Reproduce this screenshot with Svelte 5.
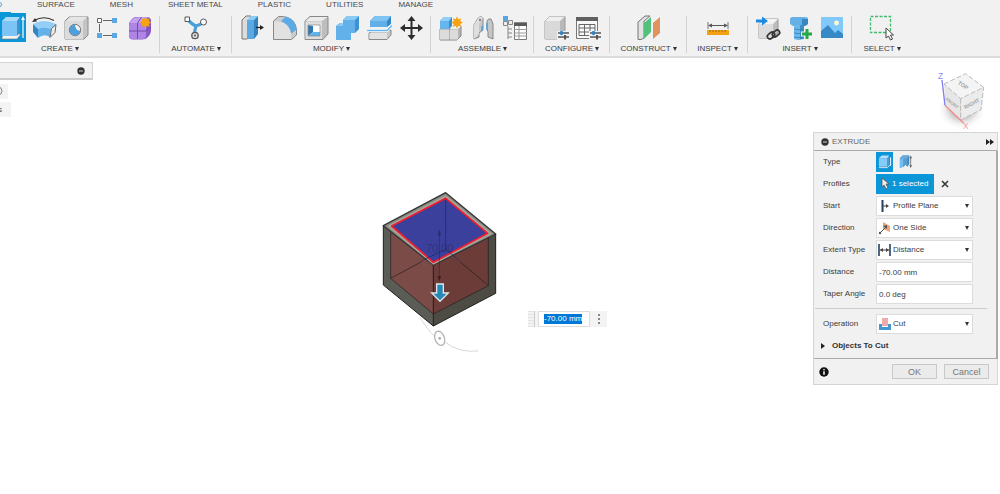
<script>
  import { onMount } from 'svelte';

  const tabs = ['SOLID', 'SURFACE', 'MESH', 'SHEET METAL', 'PLASTIC', 'UTILITIES', 'MANAGE'];

  const spark = (x, y) =>
    `<path transform="translate(${x} ${y})" d="M0-6 1.4-3.2 4.2-4.2 3.2-1.4 6 0 3.2 1.4 4.2 4.2 1.4 3.2 0 6-1.4 3.2-4.2 4.2-3.2 1.4-6 0-3.2-1.4-4.2-4.2-1.4-3.2z" fill="#f6a313"/>`;
  const sliders =
    '<path d="M15 18h11M15 22h11" stroke="#555" stroke-width="1.4"/><path d="M18.5 16v4" stroke="#1b84d8" stroke-width="2.4"/><path d="M22 20v4.5" stroke="#555" stroke-width="2"/>';

  const icons = {
    extrude:
      '<path d="M3 22l3-3h16l-4 5H3z" fill="#f3f3f3" stroke="#777" stroke-width=".6"/><path d="M3 6l4-4h14l-3 4z" fill="#a9dcfb"/><path d="M3 6h15v15H3z" fill="#7cc3f6"/><path d="M18 6l3-4v15l-3 4z" fill="#3f94d2"/><path d="M24 5v18" stroke="#fff" stroke-width="1.2"/><path d="M24 1l2 4h-4z" fill="#fff"/>',
    bend:
      '<path d="M3 5.500Q13 0 23 5.500" fill="none" stroke="#333" stroke-width="1.1"/><path d="M1 7l3-4 2 3.500z" fill="#333"/><path d="M2 9Q13 3 25 9l-5 5Q13 10 7 14z" fill="#92cef8"/><path d="M2 9l5 5v9l-5-6z" fill="#3586c0"/><path d="M7 14Q13 10.500 20 14l-1 8Q13 18 7 23z" fill="#62b1ea"/><path d="M20.500 13.500l4.500-4-1 8-5 5z" fill="#eee" stroke="#666" stroke-linejoin="round"/>',
    hole:
      '<path d="M2 6l4-4h19v18l-4 4H2z" fill="#c4c4c4" stroke="#8a8a8a" stroke-linejoin="round"/><path d="M3 6l4-4h17l-4 4z" fill="#e5e5e5"/><path d="M2 6h18v18H2z" fill="#dcdcdc"/><circle cx="12" cy="15" r="5.7" fill="#f1f1f1" stroke="#777"/><path d="M12 9.500a5.500 5.500 0 1 0 5.500 6q-5 1-5.500-6z" fill="#4f9fda"/>',
    sketch:
      '<path d="M8 5.500h9M4.500 9v8M8 20.500h9" stroke="#666" fill="none"/><path d="M2.500 3.500h4v4h-4z" fill="#fff" stroke="#666"/><path d="M17 3h5v5h-5zM2 18h5v5H2zM17 18h5v5h-5z" fill="#5aa8df"/>',
    form:
      '<path d="M2 9q0-2 4-6 1-1 5-1h9q4 0 4 4v10q0 3-3 6-2 2.500-6 2.500H6q-4 0-4-4z" fill="#8859c4"/><path d="M2 11q0-3 3-3h11q3 0 3 3v10q0 3-3 3H5q-3 0-3-3z" fill="#ae84e6"/><path d="M2 9q1-3 5-6l6-1h8l-4 6H5q-3 0-3 1z" fill="#c3a2f0"/><path d="M10.500 8v16M2 16h17l5-4M10.500 8l4-6" stroke="#6d43a5" fill="none" stroke-width=".9"/>' + spark(18.5, 7.5),
    automate:
      '<path d="M5 5q5 5 8 6 4-1 8-4M13 11q-2 5-1 10" fill="none" stroke="#4b9fd9" stroke-width="3.200"/><path d="M2 2h4.500v4.500H2z" fill="#fff" stroke="#555"/><circle cx="20.500" cy="7" r="3" fill="#fff" stroke="#555"/><circle cx="12" cy="20.500" r="3.200" fill="#ddd" stroke="#555" stroke-width="1.300"/><circle cx="12" cy="20.500" r="1" fill="#555"/>',
    pressPull:
      '<path d="M3 5l4-4h5v20l-4 3H3z" fill="#dcdcdc" stroke="#777"/><path d="M8 5l4-4h7l-4 4z" fill="#8accf8"/><path d="M8 5h7v19H8z" fill="#5ba9e3"/><path d="M15 5l4-4v18l-4 5z" fill="#3182bf"/><path d="M17 12.500h5" stroke="#222" stroke-width="1.300"/><path d="M21 10l4 2.500-4 2.500z" fill="#222"/>',
    fillet:
      '<path d="M2.500 6l5-4.500h5q12 2 13 13V20l-5 4.500h-18z" fill="#ccc" stroke="#888"/><path d="M3 6.500h4q11 1 13 12V24H3z" fill="#e1e1e1"/><path d="M10 6l5-4.500q10 3 10.500 13l-5 4Q18 9 10 6z" fill="#5aaae5"/>',
    shell:
      '<path d="M2 6l5-4.500h18V19l-5 5.500H2z" fill="#bdbdbd" stroke="#888" stroke-linejoin="round"/><path d="M2.500 6l5-4h17L19 6z" fill="#ececec"/><path d="M2.500 6.500H19V24H2.500z" fill="#dedede"/><path d="M5 10h12v11H5z" fill="#fff"/><path d="M5 10l5 1v6l-5 4z" fill="#2e78b3"/><path d="M5 21l5-4h7v4z" fill="#61b2ec"/><path d="M5 10h12v11H5z" fill="none" stroke="#888" stroke-width=".7"/>',
    combine:
      '<path d="M8 5l4-4h12v13l-4 4h-4v3l-4 4H1V11l4-3h3z" fill="#3d92d1"/><path d="M8 5h12v13h-4v7H1V11h7z" fill="#62b1ea"/><path d="M8 5l4-4h12l-4 4zM1 11l4-3h3v3z" fill="#8acbf6"/>',
    split:
      '<path d="M2 18l5-3h17v5l-4 4.500H2z" fill="#c8c8c8" stroke="#888"/><path d="M2.500 18H20v6H2.500z" fill="#e3e3e3"/><path d="M3 6l5-5h16v8l-4 3H3z" fill="#3787c4"/><path d="M3 6h17v6H3z" fill="#61afe9"/><path d="M3 6l5-5h16l-4 5z" fill="#7fc3f2"/><path d="M0 15.500h20l5-5" fill="none" stroke="#fff" stroke-width="3"/><path d="M0 15.500h20l5-5" fill="none" stroke="#61b6f0" stroke-width="1.500"/>',
    move:
      '<path d="M12.500 4v18M4 13h18" stroke="#2d2d2d" stroke-width="2"/><path d="M12.500 1l4 5h-8zM12.500 25l4-5h-8zM1 13l5-4v8zM24 13l-5-4v8z" fill="#2d2d2d"/>',
    component:
      '<path d="M2 14h11l4-3h6v10l-4 4H2z" fill="#b5b5b5" stroke="#888"/><path d="M2 14.500h9v10H2zM12 14.500h8v10h-8z" fill="#dcdcdc"/><path d="M12 14l4-3h7l-3 3z" fill="#f1f1f1"/><path d="M2 6l4-4h8v9l-3 3H2z" fill="#3a8dcb"/><path d="M2 6h9v8H2z" fill="#66b5ed"/><path d="M2 6l4-4h8l-3 4z" fill="#8fcff9"/>' + spark(19, 7.5),
    joint:
      '<path d="M4 10l4-7q3-3 5 0v12l-4 3v4l-5 2z" fill="#c7c7c7" stroke="#888"/><path d="M8 3q3-3 5 0l-4 6v10l-5 5V10z" fill="#dedede"/><path d="M23 9l-2-5q-3-1-4 2v8l1 3v5l5 2z" fill="#c6c6c6" stroke="#888"/><circle cx="10" cy="5" r="1.200" fill="#888"/><path d="M12 11v5M17 8v7" stroke="#4ba2df" stroke-width="1.500"/>',
    bom:
      '<path d="M6 11v13M6 14h4M6 18h4M6 22h4" fill="none" stroke="#888"/><path d="M1 1h5v5H1z" fill="#57a8e2"/><path d="M1.500 6.500h4v4h-4zM6.500 5.500h4v4h-4z" fill="#eee" stroke="#888"/><path d="M12.500 8h12v16.500h-12z" fill="#fff" stroke="#777"/><path d="M12 7.500h13v3.500H12z" fill="#5b5b5b"/><path d="M12 14.500h13M12 18h13M12 21h13M17 11v14" stroke="#999"/>',
    config:
      '<path d="M2 6l5-4.500h15V19l-4 5H2z" fill="#b9b9b9" stroke="#999"/><path d="M2 6h15v18H2z" fill="#d9d9d9"/><path d="M2 6l5-4.500h15L17 6z" fill="#eee"/><path d="M14 16h13v10H14z" fill="#f1f1f1"/>' + sliders,
    configTable:
      '<path d="M1.500 2.500h21v21h-21z" fill="#f8f8f8" stroke="#777"/><path d="M1 2h22v4H1z" fill="#606060"/><path d="M4 9.500h16v11H4zM4 13h16M4 17h16M9.500 9v11M15 9v11" fill="none" stroke="#666"/><path d="M14 16h13v10H14z" fill="#f1f1f1"/>' + sliders,
    plane:
      '<path d="M2 7l7-6h5l-6 5v17l-3 1.500H2z" fill="#e2e2e2" stroke="#777"/><path d="M8 8l7-6v15l-7 7z" fill="#53c17b"/><path d="M17 8l7-6v16l-7 6z" fill="#e1935f"/>',
    measure:
      '<path d="M3 7v7M23 7v7" stroke="#777"/><path d="M4 10.500h18" stroke="#555"/><path d="M3 10.500l4-2v4zM23 10.500l-4-2v4z" fill="#555"/><path d="M2 15h22v5H2z" fill="#f3a312"/><path d="M5 15v2M8 15v2M11 15v2M14 15v2M17 15v2M20 15v2" stroke="#855c0d" stroke-width=".8"/>',
    derive:
      '<path d="M4 9l5-5h14v14l-4 5H4z" fill="#bcbcbc" stroke="#999"/><path d="M4 9h14v14H4z" fill="#dcdcdc"/><path d="M4 9l5-5h14l-5 5z" fill="#f3f3f3"/><path d="M1 6h7" stroke="#1b8ae2" stroke-width="3"/><path d="M7 1.500l6 4.500-6 4.500z" fill="#1b8ae2"/><g fill="none" stroke="#333" stroke-width="1.700"><rect x="12" y="18" width="8" height="5" rx="2.500" transform="rotate(-40 16 20.500)"/><rect x="17" y="16" width="8" height="5" rx="2.500" transform="rotate(-40 21 18.500)"/></g>',
    bolt:
      '<path d="M3 4q0-2 3-2h12q3 0 3 2v5l-3 2H6L3 9z" fill="#65b1e6"/><path d="M15 4h6v5l-3 2h-3z" fill="#3987c0"/><path d="M7 10h9v14q-4 2-9 0z" fill="#6cb6e9"/><path d="M13 10h4v14h-4z" fill="#3f8dc6"/><path d="M7 14l9 1M7 18l9 1M7 22l9 1" stroke="#2f78b0" stroke-width=".7"/><path d="M20 13v12M14 19h12" stroke="#f1f1f1" stroke-width="5"/><path d="M20 14v10M15 19h10" stroke="#27a84b" stroke-width="3"/>',
    canvas:
      '<path d="M2 2h22v21H2z" fill="#81c9fb"/><path d="M2 16l7-6 7 8 3-3 5 4v4H2z" fill="#3689c5"/><circle cx="17.500" cy="8" r="2.400" fill="#fffbd0"/>',
    select:
      '<path d="M1.500 1.500h20v16h-20z" fill="none" stroke="#42bd70" stroke-width="1.300" stroke-dasharray="3 1.500"/><path d="M17 13v10l2.500-2 2 4 2-1-2-4h3z" fill="#fff" stroke="#444"/>'
  };

  const groups = [
    { name: 'CREATE', icons: ['extrude', 'bend', 'hole', 'sketch', 'form'] },
    { name: 'AUTOMATE', icons: ['automate'] },
    { name: 'MODIFY', icons: ['pressPull', 'fillet', 'shell', 'combine', 'split', 'move'] },
    { name: 'ASSEMBLE', icons: ['component', 'joint', 'bom'] },
    { name: 'CONFIGURE', icons: ['config', 'configTable'] },
    { name: 'CONSTRUCT', icons: ['plane'] },
    { name: 'INSPECT', icons: ['measure'] },
    { name: 'INSERT', icons: ['derive', 'bolt', 'canvas'] },
    { name: 'SELECT', icons: ['select'] }
  ];

  const choices = [
    { id: 'start', label: 'Start', value: 'Profile Plane', art: '<path d="M4.500 1v12" stroke="#24405f" stroke-width="2"/><path d="M5 7h4" stroke="#444"/><path d="M8 5l3 2-3 2z" fill="#444"/>' },
    { id: 'direction', label: 'Direction', value: 'One Side', art: '<path d="M5 1l7 4v6L5 8z" fill="#efa378"/><path d="M2 12l6-6" stroke="#555"/><path d="M9 4v4L5 5z" fill="#555"/><circle cx="2" cy="12" r="1.200" fill="#555"/>' },
    { id: 'extent', label: 'Extent Type', value: 'Distance', art: '<path d="M1 1v12M12 1v12" stroke="#24405f" stroke-width="1.600"/><path d="M2 7h9" stroke="#444"/><path d="M2 7l3-2v4zM11 7L8 5v4z" fill="#444"/>' }
  ];

  let distance = $state('-70.00 mm');
  let taper = $state('0.0 deg');
  let floating;

  onMount(() => {
    floating.focus();
    floating.select();
  });
</script>

{#snippet choice(id, label, value, art)}
  <div class="row">
    <label for={id}>{label}</label>
    <div class="pick">
      <svg viewBox="0 0 14 14" aria-hidden="true">{@html art}</svg>
      <select {id}><option>{value}</option></select>
      <i class="caret"></i>
    </div>
  </div>
{/snippet}

<div class="app">
  <header>
    <nav>
      {#each tabs as tab, i}
        <a href="#{tab}" class:active={i === 0}>{tab}</a>
      {/each}
    </nav>
    <div class="ribbon">
      {#each groups as group, g}
        <section class="group" class:first={g === 0}>
          <div class="tools">
            {#each group.icons as name}
              <button class="tool" class:on={name === 'extrude'} aria-label={name}>
                <svg viewBox="0 0 26 26">{@html icons[name]}</svg>
              </button>
            {/each}
          </div>
          <button class="menu">{group.name}<i class="caret"></i></button>
        </section>
      {/each}
    </div>
  </header>

  <main>
    <aside>
      <div class="browser">
        <button class="round" aria-label="Collapse browser"><svg viewBox="0 0 8 8"><circle cx="4" cy="4" r="3.700" fill="#333" /><path d="M2 4h4" stroke="#ccc" /></svg></button>
      </div>
      <div class="node"><svg viewBox="0 0 7 14"><circle cx="-2" cy="7" r="4" fill="none" stroke="#888" /></svg></div>
      <div class="node wide"><span>s</span></div>
    </aside>

    <svg class="model" viewBox="0 0 420 540" role="img" aria-label="Extruded box">
      <g stroke-linejoin="round">
        <path d="M40 137L190 255V438L40 315z" fill="#5a5c56" />
        <path d="M190 255L377 162V340L190 438z" fill="#4c4b44" />
        <path d="M62 150L190 252V402L62 295z" fill="#7b4b48" />
        <path d="M190 252L355 170V317L190 402z" fill="#6b3c38" />
        <path d="M40 137L227 38 377 162 190 255z" fill="#8a8d86" stroke="#333532" stroke-width="4" />
        <path d="M52 138L227 46 366 161 190 254z" fill="#a9a49b" />
        <path d="M65 138L227 55 353 160 190 247z" fill="#3b409c" stroke="#f31c2c" stroke-width="5" />
      </g>
      <g fill="none" stroke="#211d1d" stroke-width="3">
        <path d="M40 137V315L190 438 377 340V162M190 255V438" />
        <path d="M62 158V295L190 402 355 317V173M62 295L155 245M270 245L355 317" stroke-width="2" />
        <path d="M227 58V208L155 242M227 208L268 242" stroke="#182866" stroke-width="2" />
        <path d="M208 155V300" stroke="#292548" stroke-width="1.500" />
      </g>
      <path d="M208 148l5 18h-10z" fill="#292d70" /><path d="M208 305l5-17h-10z" fill="#461b1b" />
      <text x="168" y="217" font-size="33" fill="#2d2d68" opacity=".6">70.00</text>
      <path d="M200 312h20v27h15l-25 25-25-25h15z" fill="#2489b7" stroke="#e1e5e7" stroke-width="4" />
      <path d="M150 412Q175 453 195 470M225 486Q265 519 325 513" fill="none" stroke="#d8d8d8" stroke-width="3" />
      <ellipse cx="209" cy="475" rx="14" ry="22" transform="rotate(-20 209 475)" fill="#fff" stroke="#b5b5b5" stroke-width="4" />
      <circle cx="209" cy="475" r="4" fill="#aaa" />
    </svg>

    <svg class="viewcube" viewBox="0 0 240 240" role="img" aria-label="View cube">
      <defs><radialGradient id="shade"><stop offset=".3" stop-color="#aaa" /><stop offset="1" stop-color="#fff" stop-opacity="0" /></radialGradient></defs>
      <ellipse cx="125" cy="148" rx="74" ry="62" fill="url(#shade)" />
      <path d="M72 72L137 41 191 82 122 116z" fill="#f4f4f4" /><path d="M72 72L122 116V180L77 138z" fill="#e6e6e6" /><path d="M122 116L191 82 183 149 122 180z" fill="#ececec" />
      <path d="M72 72L137 41 191 82 122 116zM122 116V180L183 149 191 82" fill="none" stroke="#bbb" stroke-width="3" stroke-dasharray="15 6" />
      <g font-weight="bold" fill="#a3a3a3" text-anchor="middle">
        <text x="129" y="82" font-size="17" transform="rotate(35 129 76)">TOP</text>
        <text x="97" y="134" font-size="13" transform="rotate(38 97 128)">FRONT</text>
        <text x="155" y="137" font-size="16" transform="rotate(-28 155 131)">RIGHT</text>
      </g>
      <path d="M66 60L75 136" stroke="#8080f0" stroke-width="4" /><path d="M75 136L131 190" stroke="#f28c8c" stroke-width="4" />
      <text x="54" y="57" font-size="25" fill="#8c8cf0">Z</text><text x="129" y="208" font-size="25" fill="#f59a9a">X</text>
    </svg>

    <div class="floating">
      <i class="grip"></i>
      <input bind:this={floating} bind:value={distance} aria-label="Extrude distance" />
      <button aria-label="More options"><i></i><i></i><i></i></button>
    </div>

    <form class="dialog" onsubmit={(e) => e.preventDefault()}>
      <div class="title">
        <svg viewBox="0 0 8 8"><circle cx="4" cy="4" r="3.700" fill="#333" /><path d="M2 4h4" stroke="#ccc" /></svg>
        <span>EXTRUDE</span>
        <svg class="ff" viewBox="0 0 8 8"><path d="M0 1l4 3-4 3zM4 1l4 3-4 3z" fill="#222" /></svg>
      </div>
      <div class="body">
        <div class="row">
          <span>Type</span>
          <div class="types">
            <button class="type on" aria-label="Solid extrude"><svg viewBox="0 0 16 16"><path d="M2 4l3-3h8l-2 3z" fill="#b5e0fb" /><path d="M2 4h9v9H2z" fill="#89cbf8" /><path d="M11 4l2-3v10l-2 2z" fill="#4c9dd5" /><path d="M2 14h9l3-3" fill="none" stroke="#e5e5e5" /><path d="M14.500 3v9" stroke="#fff" /></svg></button>
            <button class="type" aria-label="Thin extrude"><svg viewBox="0 0 16 16"><path d="M2 4l3-3h7v9l-2 3-2-3-2 3-4 1z" fill="#398cc8" /><path d="M2 4l4 1v8l-4 1z" fill="#71bcf0" /><path d="M6 5l4-1v9l-2-2-2 2z" fill="#5b9bce" /><path d="M2 4l3-3h7l-2 3-4 1z" fill="#6aa9d8" /><path d="M13.500 3v10" stroke="#777" /><path d="M13.500 1l1.500 3h-3zM13.500 14.500l1.500-3h-3z" fill="#666" /></svg></button>
          </div>
        </div>
        <div class="row">
          <span>Profiles</span>
          <button class="chosen"><svg viewBox="0 0 10 14"><path d="M2 1v9l2-2 2 4 2-1-2-4h3z" fill="#eee" stroke="#555" stroke-width=".8" /></svg>1 selected</button>
          <button class="clear" aria-label="Clear selection"><svg viewBox="0 0 8 8"><path d="M1 1l6 6M7 1L1 7" stroke="#333" stroke-width="1.500" /></svg></button>
        </div>
        {#each choices as c}
          {@render choice(c.id, c.label, c.value, c.art)}
        {/each}
        <div class="row"><label for="dist">Distance</label><input id="dist" bind:value={distance} /></div>
        <div class="row"><label for="taper">Taper Angle</label><input id="taper" bind:value={taper} /></div>
        <hr />
        {@render choice('operation', 'Operation', 'Cut', '<path d="M1 7h3v3h6V7h3v6H1z" fill="#4597d3"/><path d="M4 1h6v8H4z" fill="#efaaaa"/>')}
        <button class="objects"><i></i>Objects To Cut</button>
      </div>
      <footer>
        <svg viewBox="0 0 10 10"><circle cx="5" cy="5" r="4.700" fill="#111" /><path d="M5 4.300v3.500M5 2v1.300" stroke="#fff" stroke-width="1.500" /></svg>
        <button>OK</button>
        <button>Cancel</button>
      </footer>
    </form>
  </main>
</div>

<style>
  :global(body) { margin: 0; background: #fff; }
  .app { min-height: 100vh; display: flex; flex-direction: column; overflow: hidden; font: 8px/10px "Liberation Sans", Arial, sans-serif; color: #3c3c3c; }
  .app * { box-sizing: border-box; }
  button, input, select { font: inherit; color: inherit; margin: 0; padding: 0; border: 0; background: none; border-radius: 0; outline: none; }
  svg { display: block; flex: none; }
  header { background: #f1f1f1; border-bottom: 2px solid #dcdcdc; }
  nav { display: flex; gap: 17px; margin-left: -31px; height: 13px; }
  nav a { padding: 0 9px; color: #484848; text-decoration: none; white-space: nowrap; }
  nav .active { color: #0b96d8; border-bottom: 1px solid #0b96d8; }
  .ribbon { display: grid; grid-template-columns: 160px 72px 199px 103px 76px 77px 61px 104px 60px; }
  .group { display: flex; flex-direction: column; align-items: center; background: linear-gradient(#d2d2d2, #d2d2d2) right center / 1px 37px no-repeat; height: 43px; }
  .group:last-child { background: none; }
  .first { margin-left: -40px; }
  .tools { display: flex; }
  .first .tools { align-self: flex-end; padding-right: 4px; }
  .tool { width: 32px; height: 29px; display: grid; place-items: center; }
  .tool svg { width: 26px; height: 26px; }
  .on { background: #0b96d8; }
  .tool.on { width: 28px; margin-right: 2px; }
  .menu { display: flex; align-items: center; gap: 2px; height: 14px; white-space: nowrap; }
  .caret { border: 2px solid transparent; border-top: 4px solid #333; border-bottom: 0; }
  main { position: relative; flex: 1; }
  aside { padding-top: 4px; }
  .browser { width: 93px; height: 18px; background: #f1f1f1; border: 1px solid #d5d5d5; border-left: 0; border-bottom: 2px solid #ccc; display: flex; align-items: center; justify-content: flex-end; padding-right: 7px; }
  .round svg, .title svg { width: 8px; height: 8px; }
  .node { width: 8px; height: 15px; margin-top: 4px; background: #f3f3f3; overflow: hidden; }
  .node svg { width: 7px; height: 14px; }
  .node.wide { width: 11px; margin-top: 3px; }
  .node span { display: block; margin-left: -2px; line-height: 15px; }
  .model { position: absolute; left: 370px; top: 122px; width: 140px; height: 180px; }
  .viewcube { position: absolute; right: 0; top: 2px; width: 80px; height: 80px; }
  .floating { position: absolute; left: 528px; top: 253px; display: flex; align-items: stretch; height: 16px; background: #f3f3f3; }
  .grip { width: 7px; margin-right: 3px; border-right: 1px solid #ccc; background: repeating-linear-gradient(#e4e4e4 0 1px, #f3f3f3 1px 3px); }
  .floating input { width: 52px; padding-left: 5px; background: #fff; border: 1px solid #ddd; }
  .floating input::selection { background: #0078d7; color: #fff; }
  .floating button { width: 17px; display: flex; flex-direction: column; align-items: center; justify-content: center; gap: 2px; }
  .floating button i { width: 2px; height: 2px; background: #666; border-radius: 1px; }
  .dialog { position: absolute; right: 2px; top: 74px; width: 185px; background: #f1f1f1; border: 1px solid #d5d5d5; }
  .title { height: 18px; display: flex; align-items: center; gap: 3px; padding: 0 3px 0 7px; border-bottom: 1px solid #aaa; color: #666; }
  .title .ff { margin-left: auto; }
  .body { display: flex; flex-direction: column; border-right: 2px solid #aaa; border-bottom: 1px solid #aaa; margin-right: -1px; height: 208px; }
  .row { display: flex; align-items: center; height: 22px; padding-left: 9px; }
  .row > span, .row > label { width: 53px; }
  .row > input, .pick { width: 97px; height: 20px; background: #fff; border: 1px solid #dcdcdc; }
  .row > input { padding-left: 2px; }
  .pick { position: relative; }
  .pick svg { position: absolute; left: 1px; top: 2px; width: 14px; height: 14px; }
  .pick select { appearance: none; width: 100%; height: 18px; padding-left: 16px; }
  .pick .caret { position: absolute; right: 3px; top: 7px; pointer-events: none; }
  .types { display: flex; gap: 4px; }
  .type { width: 17px; height: 20px; display: grid; place-items: center; }
  .type svg { width: 15px; height: 16px; }
  .chosen { display: flex; align-items: center; gap: 2px; width: 58px; height: 20px; padding-left: 4px; background: #0b96d8; color: #fff; white-space: nowrap; }
  .chosen svg { width: 10px; height: 14px; }
  .clear { margin-left: 7px; }
  .clear svg { width: 8px; height: 8px; }
  hr { width: 172px; margin: 3px 0 4px 1px; border: 0; border-top: 1px solid #ccc; }
  .objects { display: flex; align-items: center; gap: 7px; height: 22px; padding-left: 7px; font-weight: bold; color: #333; }
  .objects i { border: 3px solid transparent; border-left: 4px solid #222; border-right: 0; }
  footer { display: flex; align-items: center; gap: 7px; height: 25px; padding: 0 8px 0 5px; }
  footer svg { width: 10px; height: 10px; margin-right: auto; }
  footer button { width: 45px; height: 15px; border: 1px solid #c8c8c8; background: #ebebeb; color: #777; font-size: 9px; }
</style>
